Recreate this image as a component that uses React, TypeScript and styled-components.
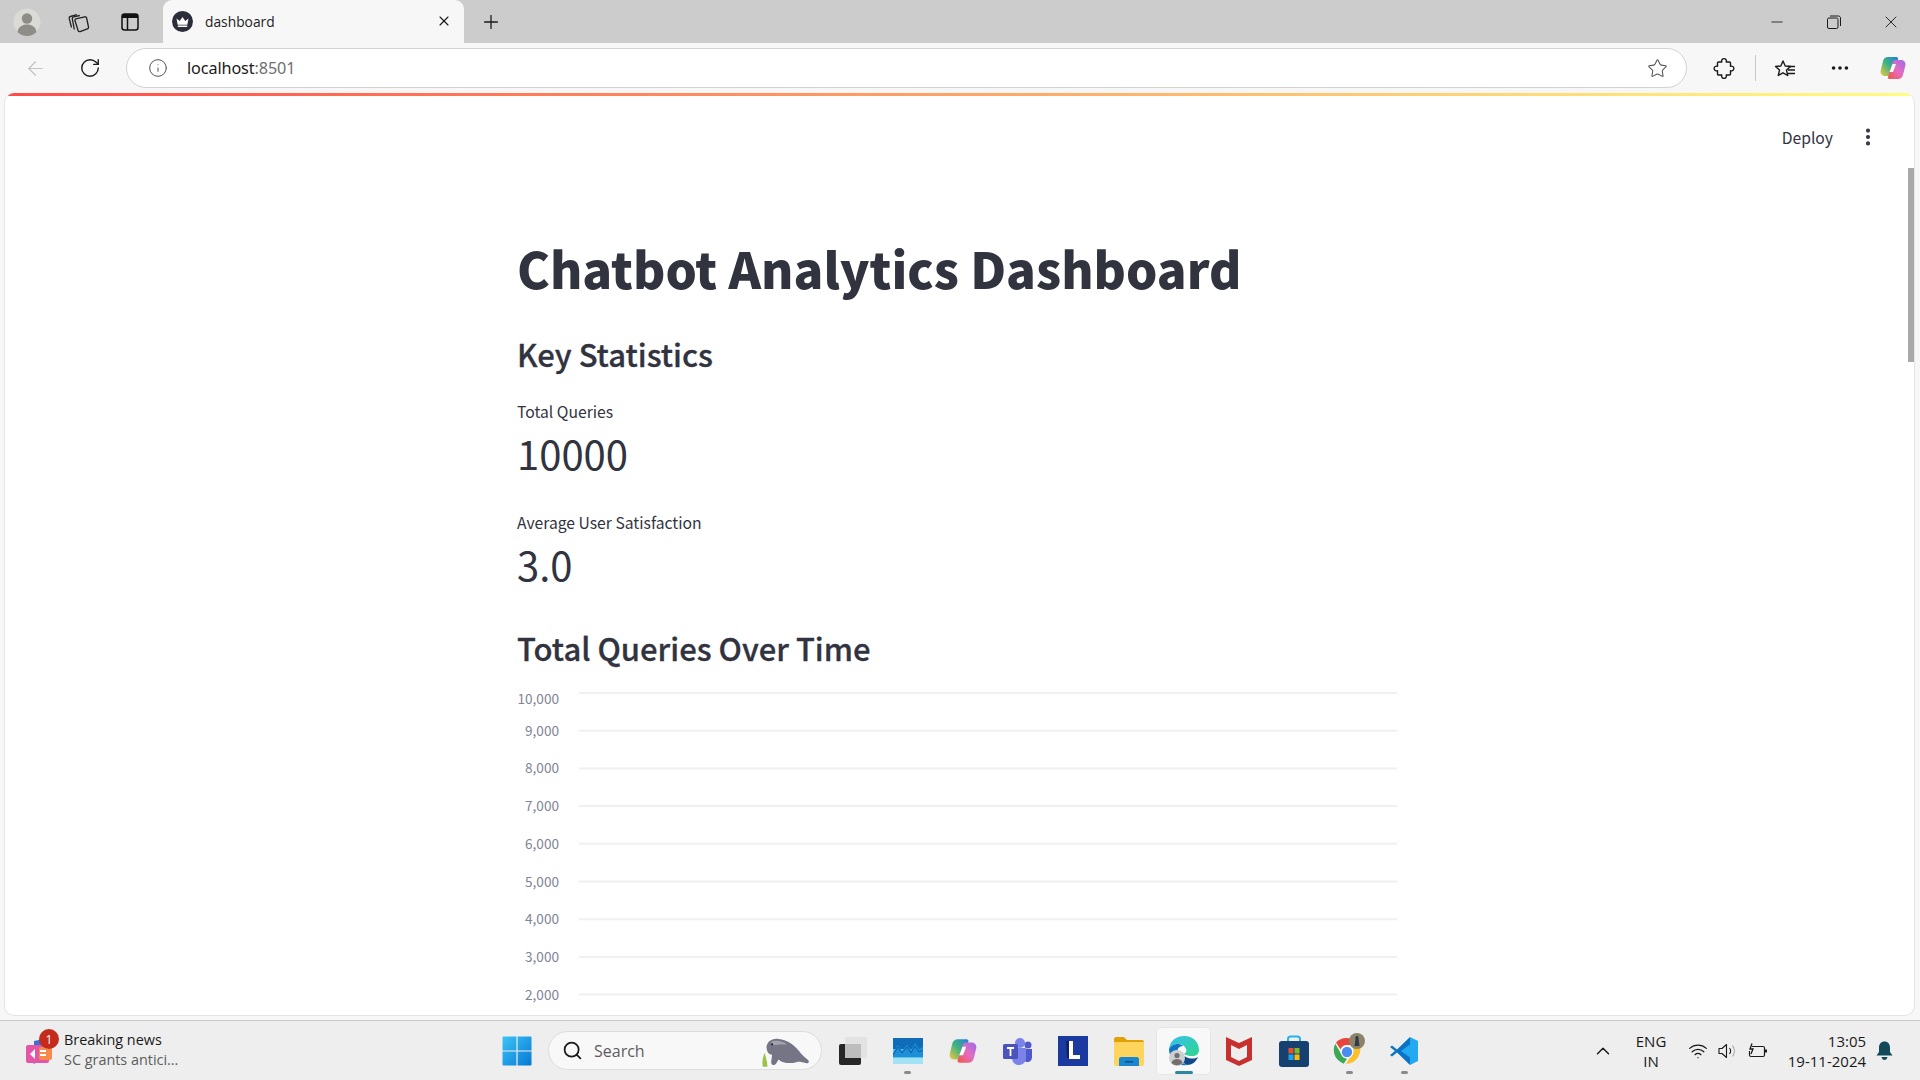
import styled, { createGlobalStyle } from "styled-components";
import {
  ArrowLeft,
  ChevronUp,
  EllipsisVertical,
  Info,
  Minus,
  MoreHorizontal,
  Plus,
  RotateCw,
  Search,
  Star,
  Wifi,
  X,
} from "lucide-react";

const GlobalStyle = createGlobalStyle`
  html, body {
    margin: 0;
    padding: 0;
    height: 1080px;
    overflow: hidden;
    background: #f7f7f7;
  }
  * {
    box-sizing: border-box;
  }
`;

const Screen = styled.div`
  width: 1920px;
  height: 1080px;
  display: flex;
  flex-direction: column;
  font-family: "Open Sans", "Noto Sans", sans-serif;
  color: #1a1a1a;
`;

const TabStrip = styled.div`
  height: 43px;
  flex: none;
  display: flex;
  align-items: center;
  background: #cccccc;
`;

const StripButton = styled.div<{ $width: number }>`
  width: ${(p) => p.$width}px;
  height: 43px;
  flex: none;
  display: flex;
  align-items: center;
  justify-content: center;
`;

const Tab = styled.div`
  width: 301px;
  height: 43px;
  flex: none;
  display: flex;
  align-items: center;
  padding: 0 12px 1px 9px;
  background: #f7f7f7;
  border-radius: 9px 9px 0 0;
`;

const TabTitle = styled.span`
  flex: 1;
  margin-left: 12px;
  font-size: 13.8px;
  color: #222222;
`;

const StripSpacer = styled.div`
  flex: 1;
`;

const Toolbar = styled.div`
  height: 50px;
  flex: none;
  display: flex;
  align-items: center;
  background: #f7f7f7;
`;

const NavButton = styled.div<{ $width: number }>`
  width: ${(p) => p.$width}px;
  height: 50px;
  flex: none;
  display: flex;
  align-items: center;
  justify-content: center;
`;

const AddressBar = styled.div`
  width: 1561px;
  height: 40px;
  flex: none;
  display: flex;
  align-items: center;
  padding: 0 18px 0 21px;
  background: #ffffff;
  border: 1px solid #d2d2d2;
  border-radius: 20px;
`;

const Url = styled.span`
  flex: 1;
  margin-left: 19px;
  font-family: "Noto Sans", sans-serif;
  font-size: 16.2px;
  color: #1a1a1a;
  letter-spacing: -0.1px;
`;

const UrlPort = styled.span`
  color: #6f6f6f;
`;

const ToolbarDivider = styled.div`
  width: 1px;
  height: 26px;
  margin-left: -6px;
  background: #c9c9c9;
  flex: none;
`;

const PageArea = styled.div`
  flex: 1;
  min-height: 0;
  padding: 0 5px 4px 4px;
  background: #f7f7f7;
`;

const PageCard = styled.div`
  position: relative;
  height: 923px;
  overflow: hidden;
  background: #ffffff;
  border-radius: 10px;
  border: 1px solid #e4e4e4;
  border-top: none;
  font-family: "Noto Sans CJK SC", "Noto Sans", sans-serif;
  color: #31333f;
`;

const Decoration = styled.div`
  height: 3px;
  background: linear-gradient(90deg, #ff4b4b, #fffd80);
`;

const AppHeader = styled.div`
  height: 82px;
  display: flex;
  align-items: center;
  justify-content: flex-end;
  padding: 0 35px 0 0;
`;

const DeployLabel = styled.span`
  font-size: 15.7px;
  margin-right: 24px;
  color: #31333f;
`;

const Main = styled.div`
  width: 880px;
  margin-left: 512px;
  display: flex;
  flex-direction: column;
`;

const Title = styled.h1`
  margin: 52px 0 0;
  font-size: 49.3px;
  line-height: 76px;
  font-weight: 900;
  color: #31333f;
`;

const Heading = styled.h3<{ $top: number }>`
  margin: ${(p) => p.$top}px 0 0;
  font-size: 31px;
  line-height: 50px;
  font-weight: 500;
  -webkit-text-stroke: 0.3px #31333f;
  color: #31333f;
`;

const Metric = styled.div<{ $top: number }>`
  margin-top: ${(p) => p.$top}px;
  display: flex;
  flex-direction: column;
`;

const MetricLabel = styled.div`
  font-size: 15.7px;
  line-height: 24px;
  color: #31333f;
`;

const MetricValue = styled.div`
  font-size: 40px;
  line-height: 58px;
  font-weight: 400;
  color: #31333f;
`;

const ChartWrap = styled.div`
  margin-top: 12px;
`;

const ChartSvg = styled.svg`
  display: block;
`;

const AxisLabel = styled.text`
  font-family: "Noto Sans CJK SC", sans-serif;
  font-size: 13.6px;
  fill: #808495;
`;

const ScrollThumb = styled.div`
  position: absolute;
  right: 0;
  top: 75px;
  width: 6px;
  height: 194px;
  background: #a8a8a8;
`;

const Taskbar = styled.div`
  height: 60px;
  flex: none;
  display: flex;
  align-items: center;
  background: #eeeeee;
  border-top: 1px solid #c8c8c8;
`;

const NewsWidget = styled.div`
  position: relative;
  width: 502px;
  height: 100%;
  flex: none;
  display: flex;
  align-items: center;
  padding-left: 24px;
`;

const NewsBadge = styled.div`
  position: absolute;
  left: 39px;
  top: 8px;
  width: 20px;
  height: 20px;
  border-radius: 50%;
  background: #c42b1c;
  color: #ffffff;
  font-size: 12px;
  display: flex;
  align-items: center;
  justify-content: center;
`;

const NewsText = styled.div`
  margin: -2px 0 0 10px;
  display: flex;
  flex-direction: column;
  font-size: 14.4px;
  line-height: 20px;
  white-space: nowrap;
`;

const NewsSub = styled.span`
  color: #5d5d5d;
`;

const StartButton = styled.div`
  width: 30px;
  height: 100%;
  flex: none;
  display: flex;
  align-items: center;
  justify-content: center;
`;

const SearchBox = styled.div`
  position: relative;
  width: 274px;
  height: 39px;
  margin-left: 16px;
  flex: none;
  display: flex;
  align-items: center;
  padding-left: 13px;
  background: #f8f8f8;
  border: 1px solid #dcdcdc;
  border-radius: 20px;
  font-size: 16px;
  color: #5d5d5d;
`;

const SearchText = styled.span`
  margin-left: 11px;
`;

const ManateeSlot = styled.div`
  position: absolute;
  right: 7px;
  top: 2px;
`;

const TaskIcons = styled.div`
  margin-left: 3px;
  height: 100%;
  display: flex;
  align-items: center;
`;

const TaskIcon = styled.div<{ $active?: boolean }>`
  position: relative;
  width: 55.2px;
  height: 48px;
  flex: none;
  display: flex;
  align-items: center;
  justify-content: center;
  border-radius: 5px;
  background: ${(p) => (p.$active ? "#f8f8f8" : "transparent")};
  box-shadow: ${(p) => (p.$active ? "0 0 0 1px #e6e6e6 inset" : "none")};
`;

const RunDot = styled.div<{ $active?: boolean }>`
  position: absolute;
  left: 50%;
  bottom: 1px;
  width: ${(p) => (p.$active ? 18 : 7)}px;
  height: 3px;
  margin-left: ${(p) => (p.$active ? -9 : -3.5)}px;
  border-radius: 2px;
  background: ${(p) => (p.$active ? "#2a8a9e" : "#8a8a8a")};
`;

const Tray = styled.div`
  flex: 1;
  height: 100%;
  display: flex;
  align-items: center;
  padding-left: 160px;
`;

const Lang = styled.div`
  width: 60px;
  margin-left: 7px;
  text-align: center;
  font-size: 15px;
  line-height: 20px;
`;

const TrayIcons = styled.div`
  margin-left: 7px;
  display: flex;
  align-items: center;
  gap: 10px;
`;

const Clock = styled.div`
  width: 88px;
  margin-left: 10px;
  text-align: right;
  font-size: 15px;
  line-height: 20px;
  white-space: nowrap;
`;

const BellSlot = styled.div`
  margin-left: 10px;
  display: flex;
`;

const ticks = [10000, 9000, 8000, 7000, 6000, 5000, 4000, 3000, 2000];

function QueriesChart() {
  return (
    <ChartSvg width="880" height="340" viewBox="0 0 880 340">
      {ticks.map((t, i) => {
        const y = 8 + i * 37.7;
        return (
          <g key={t}>
            <line x1="62" x2="880" y1={y} y2={y} stroke="#f0f0f3" strokeWidth="2" />
            <AxisLabel x="42" y={(i === 0 ? y + 10 : y + 4) + 1} textAnchor="end">
              {t.toLocaleString("en-US")}
            </AxisLabel>
          </g>
        );
      })}
    </ChartSvg>
  );
}

function Favicon() {
  return (
    <svg width="21" height="21" viewBox="0 0 21 21">
      <circle cx="10.5" cy="10.5" r="10.5" fill="#2b2d3a" />
      <path d="M4.500 7.500l3.200 2.400 2.800-4 2.800 4 3.200-2.400-1.200 6.300H5.700z" fill="#fff" />
      <rect x="5.800" y="14.500" width="9.400" height="1.500" fill="#fff" />
    </svg>
  );
}

function Avatar() {
  return (
    <svg width="28" height="28" viewBox="0 0 28 28">
      <circle cx="14" cy="14" r="13.5" fill="#dadad6" />
      <circle cx="14" cy="10.5" r="5.2" fill="#8f8d88" />
      <path d="M4.5 24c1-5.5 5-7.5 9.5-7.500s8.500 2 9.500 7.500a13.500 13.500 0 0 1-19 0z" fill="#8f8d88" />
    </svg>
  );
}

function CollectionsIcon() {
  return (
    <svg width="24" height="24" viewBox="0 0 24 24" fill="none" stroke="#222" strokeWidth="1.300" strokeLinejoin="round">
      <path d="M5.500 17.500L3.200 8.400c-.2-.9.300-1.700 1.100-1.900l6.700-1.800" />
      <path d="M8.300 19.500L6.300 8.700c-.2-.9.300-1.700 1.200-1.900l6.300-1.300" />
      <path d="M9.700 8.900l9-2.100c.9-.2 1.700.3 1.900 1.200l1.900 9c.2.900-.3 1.700-1.200 1.900l-7.200 2.700c-.9.300-1.800-.2-2-1.100L9 10.800c-.2-.9 0-1.700.7-1.900z" />
    </svg>
  );
}

function TabActionsIcon() {
  return (
    <svg width="18" height="18" viewBox="0 0 18 18" fill="none">
      <rect x="1" y="1" width="16" height="16" rx="2.500" stroke="#111" strokeWidth="1.500" />
      <path d="M1 2.500C1 1.600 1.600 1 2.500 1h13c.9 0 1.500.6 1.500 1.500V5H1z" fill="#111" />
      <path d="M6.500 5v12" stroke="#111" strokeWidth="1.500" />
    </svg>
  );
}

function RestoreIcon() {
  return (
    <svg width="14" height="14" viewBox="0 0 14 14" fill="none" stroke="#1a1a1a" strokeWidth="1">
      <rect x="0.500" y="3" width="10.500" height="10.500" rx="1.500" />
      <path d="M3 1h8.500c1 0 2 .9 2 2v8" />
    </svg>
  );
}

function ExtensionsIcon() {
  return (
    <svg width="22" height="22" viewBox="0 0 20 22" fill="none" stroke="#1a1a1a" strokeWidth="1.400" strokeLinejoin="round">
      <path d="M4.500 5H7.800a2.400 2.400 0 1 1 4.400 0H15.500a1 1 0 0 1 1 1V9.300a2.400 2.400 0 1 1 0 4.400V17a1 1 0 0 1-1 1H12.200a2.400 2.400 0 1 1-4.400 0H4.500a1 1 0 0 1-1-1V13.700a2.400 2.400 0 1 1 0-4.400V6a1 1 0 0 1 1-1z" />
    </svg>
  );
}

function FavoritesIcon() {
  return (
    <svg width="22" height="20" viewBox="0 0 22 20" fill="none" stroke="#1a1a1a" strokeWidth="1.400" strokeLinejoin="round">
      <path d="M10 2l2.200 5 5.300.5-4 3.600 1.200 5.400L10 13.800 5.300 16.500l1.200-5.400-4-3.600L7.800 7z" transform="translate(-1 1)" />
      <path d="M14 8.500h7M14 12h7M14 15.500h7" stroke="#1a1a1a" />
    </svg>
  );
}

function CopilotIcon({ size }: { size: number }) {
  return (
    <svg width={size} height={size} viewBox="0 0 28 28">
      <defs>
        <linearGradient id={`cpa${size}`} x1="0" y1="1" x2="1" y2="0">
          <stop offset="0" stopColor="#f7c93e" />
          <stop offset="0.5" stopColor="#3fb37f" />
          <stop offset="1" stopColor="#1f7fe0" />
        </linearGradient>
        <linearGradient id={`cpb${size}`} x1="0" y1="1" x2="1" y2="0">
          <stop offset="0" stopColor="#f0563f" />
          <stop offset="0.5" stopColor="#e56cc0" />
          <stop offset="1" stopColor="#9a6be8" />
        </linearGradient>
      </defs>
      <path d="M9 3h8c1 0 2 .6 2.200 1.600L14 20c-.4 1.200-1.300 2-2.500 2H6c-3 0-5-2.500-4.400-5.300L4 7c.7-2.500 2.500-4 5-4z" fill={`url(#cpa${size})`} />
      <path d="M19 6h3c3 0 5 2.500 4.400 5.300L24 21c-.7 2.500-2.500 4-5 4h-8c-1 0-2-.6-2.200-1.600L14 8c.4-1.200 1.300-2 2.500-2z" fill={`url(#cpb${size})`} />
      <path d="M13.500 10h3.500l-3 8h-3.500z" fill="#fff" />
    </svg>
  );
}

function NewsIcon() {
  return (
    <svg width="30" height="30" viewBox="0 0 30 30">
      <path d="M5 22l17-2-12 8z" fill="#8a5be8" />
      <path d="M10 5l10-2v8H10z" fill="#3a6fd8" />
      <rect x="2" y="9" width="23" height="18" rx="2" fill="#e455a8" />
      <rect x="15" y="11" width="13" height="13" rx="2" fill="#f58a4b" />
      <path d="M6 18l5-5v10z" fill="#fff" />
      <path d="M16 15h6M16 19h6" stroke="#fff" strokeWidth="1.800" />
    </svg>
  );
}

function WindowsLogo() {
  return (
    <svg width="30" height="30" viewBox="0 0 30 30">
      <defs>
        <linearGradient id="win" x1="0" y1="0" x2="1" y2="1">
          <stop offset="0" stopColor="#3cc4f5" />
          <stop offset="1" stopColor="#0678d4" />
        </linearGradient>
      </defs>
      <rect x="0.500" y="0.500" width="29" height="29" rx="1" fill="url(#win)" />
      <path d="M15 0v30M0 15h30" stroke="#eeeeee" strokeWidth="1.200" />
    </svg>
  );
}

function Manatee() {
  return (
    <svg width="54" height="34" viewBox="0 0 58 36">
      <path d="M3 35c-1-5 0-10 2-15 1 5 3 9 3 15z" fill="#9ac24a" />
      <path d="M7 13c1-6 7-9 13-8 9 1 15 5 21 12 4 5 7 8 10 10 3 2 1 5-2 4-4-1-7-2-10-1-7 2-15 1-19-3l-3 5c-2 2-5 1-5-2l1-8c-4 0-6-4-6-9z" fill="#757585" />
      <path d="M12 8c5-2 12-1 17 3-5 0-12 0-17 1z" fill="#a2a2b0" />
      <circle cx="13" cy="11" r="1.200" fill="#222" />
    </svg>
  );
}

function TaskViewIcon() {
  return (
    <svg width="30" height="30" viewBox="0 0 30 30">
      <rect x="1" y="8" width="22" height="21" rx="2" fill="#262626" />
      <rect x="7" y="1" width="22" height="21" rx="2" fill="#e2e2e2" />
      <rect x="7" y="8" width="16" height="14" fill="#bdbdbd" />
    </svg>
  );
}

function WidgetsIcon() {
  return (
    <svg width="30" height="26" viewBox="0 0 30 26">
      <rect width="30" height="26" rx="1" fill="#5cc6ee" />
      <rect width="30" height="11" fill="#0f6cb8" />
      <path d="M0 15l5-8 4 6 5-6 4 5 4-7 4 6 4-2v10H0z" fill="#1c8fd8" />
      <path d="M0 17l5-8 4 6 5-6 4 6 4-7 4 6 4-2" fill="none" stroke="#0a4f94" strokeWidth="0.800" />
      <rect y="20" width="30" height="6" fill="#a4e2f6" />
    </svg>
  );
}

function TeamsIcon() {
  return (
    <svg width="30" height="28" viewBox="0 0 30 28">
      <circle cx="17" cy="6" r="5" fill="#7b83eb" />
      <circle cx="25" cy="8" r="3.500" fill="#5059c9" />
      <path d="M20 12h9v8c0 3-2 5-4.500 5S20 23 20 20z" fill="#5059c9" />
      <path d="M9 11h14v10c0 4-3 7-7 7s-7-3-7-7z" fill="#7b83eb" />
      <rect x="0" y="7" width="15" height="15" rx="1.500" fill="#4b53bc" />
      <path d="M4 11h7M7.500 11v8" stroke="#fff" strokeWidth="1.800" />
    </svg>
  );
}

function LetterTile() {
  return (
    <svg width="30" height="30" viewBox="0 0 30 30">
      <rect width="30" height="30" fill="#1b3aa0" />
      <path d="M8 5h3v17h-2z" fill="#0d2260" />
      <path d="M11 5h4v14h7v4H11z" fill="#ffffff" />
    </svg>
  );
}

function FolderIcon() {
  return (
    <svg width="30" height="30" viewBox="0 0 30 30">
      <path d="M0 3c0-1 .8-2 2-2h8l3 3h15c1 0 2 .8 2 2v4H0z" fill="#e0a106" />
      <path d="M0 6h30v22c0 1-.8 2-2 2H2c-1 0-2-.8-2-2z" fill="#fdd45c" />
      <path d="M5 30v-7c0-1 .7-2 2-2h16c1 0 2 1 2 2v7z" fill="#1a86d0" />
      <rect x="11" y="25" width="8" height="1.500" fill="#0b4f85" />
    </svg>
  );
}

function EdgeIcon() {
  return (
    <svg width="32" height="32" viewBox="0 0 32 32">
      <defs>
        <linearGradient id="edge1" x1="0" y1="0" x2="1" y2="1">
          <stop offset="0" stopColor="#35c1f1" />
          <stop offset="1" stopColor="#2fd68b" />
        </linearGradient>
      </defs>
      <path d="M16 1c9 0 15 6 15 14 0 4-3 6-7 6-5 0-8-2-8-2 2-1 3-3 2-5-1-3-4-5-8-5-4 0-8 2-9 5C2 6 8 1 16 1z" fill="url(#edge1)" />
      <path d="M1 14c2-4 6-5 9-5 3 0 4 1 5 2-4 0-6 3-6 7 0 5 4 10 10 12-9 2-18-6-18-16z" fill="#0f74c4" />
      <path d="M19 30c5 0 9-3 11-8-3 2-8 2-12 0-3-1-5-3-6-5 0 6 2 11 7 13z" fill="#114a8b" />
      <circle cx="9" cy="23" r="8" fill="#cfcfcf" />
      <circle cx="9" cy="20.500" r="2.600" fill="#707070" />
      <path d="M3.500 28c.5-3 3-4 5.500-4s5 1 5.500 4a8 8 0 0 1-11 0z" fill="#707070" />
    </svg>
  );
}

function McAfeeIcon() {
  return (
    <svg width="28" height="30" viewBox="0 0 28 30">
      <path d="M14 30L1 24V1l13 6 13-6v23zM6 21l8 4 8-4V9l-8 4-8-4z" fill="#c7302f" />
    </svg>
  );
}

function StoreIcon() {
  return (
    <svg width="30" height="32" viewBox="0 0 30 32">
      <path d="M9 7V4c0-1.500 1-2.500 2.500-2.500h7C20 1.500 21 2.500 21 4v3" fill="none" stroke="#27b3e8" strokeWidth="2" />
      <rect y="6" width="30" height="26" rx="3" fill="#16406f" />
      <rect x="9.500" y="13" width="5" height="5.500" fill="#e8512d" />
      <rect x="15.500" y="13" width="5" height="5.500" fill="#7eb72a" />
      <rect x="9.500" y="19.500" width="5" height="5.500" fill="#22a3e6" />
      <rect x="15.500" y="19.500" width="5" height="5.500" fill="#fbbc09" />
    </svg>
  );
}

function ChromeIcon() {
  return (
    <svg width="36" height="36" viewBox="0 0 36 36">
      <path d="M16 5a14 14 0 0 1 12.100 7H16a7 7 0 0 0-6.500 4.300L5 9.600A14 14 0 0 1 16 5z" fill="#e8453c" />
      <path d="M4.200 10.700l6 10.300A7 7 0 0 0 16 25.500l-3.200 5.200A14.500 14.500 0 0 1 4.200 10.700z" fill="#3ba853" />
      <path d="M29 13.500a14.500 14.500 0 0 1-14 17.500l6-10.200A7 7 0 0 0 21.500 13.500z" fill="#fbc02d" />
      <circle cx="16" cy="19" r="5.800" fill="#4a8cf0" stroke="#fff" strokeWidth="1.200" />
      <circle cx="26" cy="8" r="8" fill="#8c8468" />
      <path d="M26 3c1.500 0 2 1.500 1.500 3l1 7h-5l1-7C24 4.500 24.500 3 26 3z" fill="#33384a" />
    </svg>
  );
}

function VsCodeIcon() {
  return (
    <svg width="30" height="30" viewBox="0 0 30 30">
      <path d="M21 1L8 13.500 3 9.500 1 11l5 4-5 4 2 1.500 5-4L21 29z" fill="#0a74c4" />
      <path d="M21 1v7.500L12 15l9 6.500V29l8-4V5z" fill="#23a9f2" />
    </svg>
  );
}

function SpeakerIcon() {
  return (
    <svg width="20" height="18" viewBox="0 0 20 18" fill="none" strokeLinejoin="round">
      <path d="M1 6.500h3L8.500 2.500v13L4 11.500H1z" stroke="#1a1a1a" strokeWidth="1.100" />
      <path d="M11.500 6c1.300 1.700 1.300 4.300 0 6" stroke="#1a1a1a" strokeWidth="1.100" />
      <path d="M14.500 3.500c2.400 3.200 2.400 7.800 0 11" stroke="#a0a0a0" strokeWidth="1.100" />
    </svg>
  );
}

function BatteryIcon() {
  return (
    <svg width="20" height="16" viewBox="0 0 20 16" fill="none" stroke="#1a1a1a" strokeWidth="1.200">
      <path d="M4 3.500H15c1 0 1.500.5 1.500 1.500v7c0 1-.5 1.500-1.500 1.500H3c-1 0-1.500-.5-1.500-1.500V8" />
      <rect x="17" y="6.500" width="2" height="3" fill="#1a1a1a" stroke="none" />
      <path d="M4 0.500L2 6h3L3 11" strokeWidth="1.300" />
    </svg>
  );
}

function BellIcon() {
  return (
    <svg width="17" height="20" viewBox="0 0 17 20">
      <path d="M8.500 0.500c3.500 0 5.500 2.700 5.500 6v4.500l2.500 3.500H0.500L3 11V6.500c0-3.300 2-6 5.500-6z" fill="#134a59" />
      <path d="M5.500 16h6c-.4 2-1.500 3-3 3s-2.600-1-3-3z" fill="#134a59" />
    </svg>
  );
}

function App() {
  return (
    <Screen>
      <GlobalStyle />
      <TabStrip>
        <StripButton $width={54}>
          <Avatar />
        </StripButton>
        <StripButton $width={47}>
          <CollectionsIcon />
        </StripButton>
        <StripButton $width={57}>
          <TabActionsIcon />
        </StripButton>
        <StripButton $width={5} />
        <Tab>
          <Favicon />
          <TabTitle>dashboard</TabTitle>
          <X size={16} strokeWidth={1.7} color="#1a1a1a" />
        </Tab>
        <StripButton $width={54}>
          <Plus size={22} strokeWidth={1.4} color="#1a1a1a" />
        </StripButton>
        <StripSpacer />
        <StripButton $width={57}>
          <Minus size={18} strokeWidth={1.1} color="#1a1a1a" />
        </StripButton>
        <StripButton $width={57}>
          <RestoreIcon />
        </StripButton>
        <StripButton $width={57}>
          <X size={20} strokeWidth={1.1} color="#1a1a1a" />
        </StripButton>
        <StripButton $width={1} />
      </TabStrip>
      <Toolbar>
        <NavButton $width={70}>
          <ArrowLeft size={23} strokeWidth={1.3} color="#c4c4c4" />
        </NavButton>
        <NavButton $width={40}>
          <RotateCw size={22} strokeWidth={1.5} color="#1a1a1a" />
        </NavButton>
        <NavButton $width={16} />
        <AddressBar>
          <Info size={20} strokeWidth={1.2} color="#555555" />
          <Url>
            localhost<UrlPort>:8501</UrlPort>
          </Url>
          <Star size={21} strokeWidth={1.2} color="#555555" />
        </AddressBar>
        <NavButton $width={74}>
          <ExtensionsIcon />
        </NavButton>
        <ToolbarDivider />
        <NavButton $width={58}>
          <FavoritesIcon />
        </NavButton>
        <NavButton $width={52}>
          <MoreHorizontal size={22} strokeWidth={2} color="#1a1a1a" />
        </NavButton>
        <NavButton $width={54}>
          <CopilotIcon size={28} />
        </NavButton>
      </Toolbar>
      <PageArea>
        <PageCard>
          <Decoration />
          <AppHeader>
            <DeployLabel>Deploy</DeployLabel>
            <EllipsisVertical size={22} strokeWidth={2.5} color="#31333f" />
          </AppHeader>
          <Main>
            <Title>Chatbot Analytics Dashboard</Title>
            <Heading $top={23}>Key Statistics</Heading>
            <Metric $top={21}>
              <MetricLabel>Total Queries</MetricLabel>
              <MetricValue>10000</MetricValue>
            </Metric>
            <Metric $top={29}>
              <MetricLabel>Average User Satisfaction</MetricLabel>
              <MetricValue>3.0</MetricValue>
            </Metric>
            <Heading $top={30}>Total Queries Over Time</Heading>
            <ChartWrap>
              <QueriesChart />
            </ChartWrap>
          </Main>
          <ScrollThumb />
        </PageCard>
      </PageArea>
      <Taskbar>
        <NewsWidget>
          <NewsIcon />
          <NewsBadge>1</NewsBadge>
          <NewsText>
            <span>Breaking news</span>
            <NewsSub>SC grants antici...</NewsSub>
          </NewsText>
        </NewsWidget>
        <StartButton>
          <WindowsLogo />
        </StartButton>
        <SearchBox>
          <Search size={21} strokeWidth={2} color="#1a1a1a" />
          <SearchText>Search</SearchText>
          <ManateeSlot>
            <Manatee />
          </ManateeSlot>
        </SearchBox>
        <TaskIcons>
          <TaskIcon>
            <TaskViewIcon />
          </TaskIcon>
          <TaskIcon>
            <WidgetsIcon />
            <RunDot />
          </TaskIcon>
          <TaskIcon>
            <CopilotIcon size={30} />
          </TaskIcon>
          <TaskIcon>
            <TeamsIcon />
          </TaskIcon>
          <TaskIcon>
            <LetterTile />
          </TaskIcon>
          <TaskIcon>
            <FolderIcon />
          </TaskIcon>
          <TaskIcon $active>
            <EdgeIcon />
            <RunDot $active />
          </TaskIcon>
          <TaskIcon>
            <McAfeeIcon />
          </TaskIcon>
          <TaskIcon>
            <StoreIcon />
          </TaskIcon>
          <TaskIcon>
            <ChromeIcon />
            <RunDot />
          </TaskIcon>
          <TaskIcon>
            <VsCodeIcon />
            <RunDot />
          </TaskIcon>
        </TaskIcons>
        <Tray>
          <ChevronUp size={22} strokeWidth={1.6} color="#1a1a1a" />
          <Lang>
            ENG
            <br />
            IN
          </Lang>
          <TrayIcons>
            <Wifi size={20} strokeWidth={1.5} color="#1a1a1a" />
            <SpeakerIcon />
            <BatteryIcon />
          </TrayIcons>
          <Clock>
            13:05
            <br />
            19-11-2024
          </Clock>
          <BellSlot>
            <BellIcon />
          </BellSlot>
        </Tray>
      </Taskbar>
    </Screen>
  );
}

export default App;
